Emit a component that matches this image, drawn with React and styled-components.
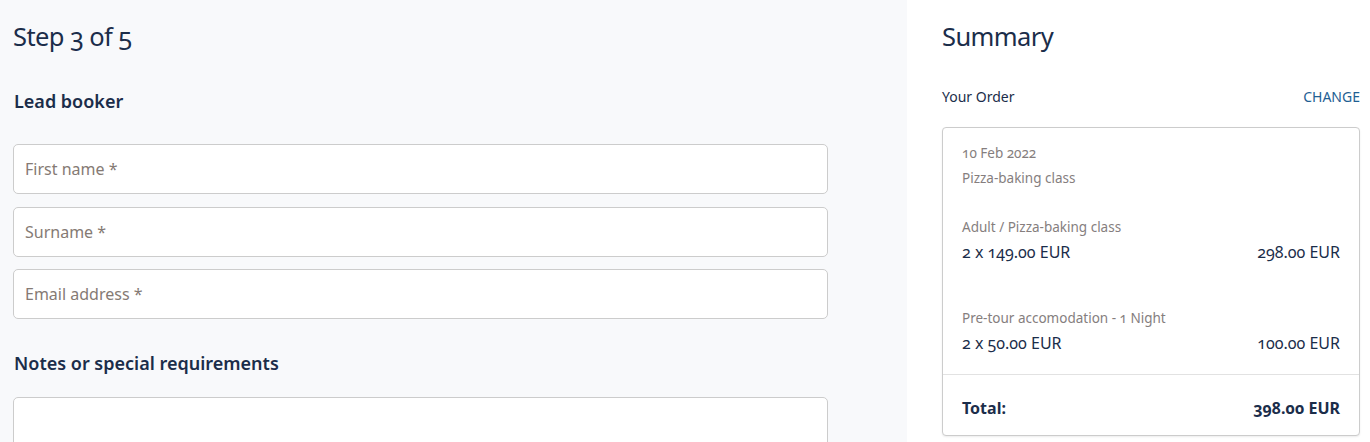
import React from 'react';
import styled, { createGlobalStyle } from 'styled-components';

const GlobalStyle = createGlobalStyle`
    html, body {
        margin: 0;
        padding: 0;
        background: #fff;
    }
    body {
        font-family: "Noto Sans", "Open Sans", sans-serif;
        color: #1b2d4a;
        font-variant-numeric: oldstyle-nums;
    }
`;

const Page = styled.div`
    display: flex;
    width: 1370px;
    height: 442px;
    overflow: hidden;
`;

const FormPane = styled.div`
    width: 907px;
    flex-shrink: 0;
    background: #f8f9fb;
    padding: 18px 79px 0 13px;
    box-sizing: border-box;
`;

const SummaryPane = styled.div`
    flex: 1;
    background: #fff;
    padding: 18px 10px 0 35px;
    box-sizing: border-box;
`;

const PageTitle = styled.h1`
    margin: 0;
    font-size: 25.5px;
    font-weight: 400;
    letter-spacing: -0.6px;
    line-height: 36px;
    color: #1b2d4a;
`;

const SectionTitle = styled.h2`
    margin: ${(p) => p.top}px 0 ${(p) => p.bottom}px 1px;
    font-size: 18px;
    font-weight: 600;
    line-height: 26px;
    color: #1b2d4a;
`;

const Fields = styled.div`
    display: flex;
    flex-direction: column;
    gap: 12.5px;
`;

const Field = styled.input`
    box-sizing: border-box;
    width: 815px;
    height: ${(p) => p.h || 50}px;
    border: 1px solid #cccccc;
    border-radius: 5px;
    background: #fff;
    padding: 0 11px;
    font-family: inherit;
    font-size: 16px;
    color: #1b2d4a;
    outline: none;
    resize: none;

    &::placeholder {
        color: #857a74;
    }
`;

const OrderHead = styled.div`
    display: flex;
    justify-content: space-between;
    align-items: center;
    margin-top: 32px;
    height: 20px;
    font-size: 14px;
`;

const ChangeLink = styled.a`
    color: #1f5f93;
    font-size: 14px;
    text-decoration: none;
    cursor: pointer;
`;

const Card = styled.div`
    margin-top: 21px;
    border: 1px solid #cccccc;
    border-radius: 4px;
    box-shadow: 0 1px 2px rgba(0, 0, 0, 0.08);
    background: #fff;
`;

const CardBody = styled.div`
    padding: 13px 19px 18px 19px;
`;

const Muted = styled.div`
    font-size: 13.5px;
    line-height: 25px;
    color: #857e7e;
`;

const LineItem = styled.div`
    margin-top: ${(p) => p.top}px;
`;

const PriceRow = styled.div`
    display: flex;
    justify-content: space-between;
    font-size: 16px;
    line-height: 25px;
    color: #1b2d4a;
    font-weight: ${(p) => (p.bold ? 700 : 400)};
`;

const TotalRow = styled(PriceRow)`
    border-top: 1px solid #e2e2e2;
    padding: 20px 19px 14px 19px;
    line-height: 26px;
`;

const App = () => {
    return (
        <>
            <GlobalStyle />
            <Page>
                <FormPane>
                    <PageTitle>Step 3 of 5</PageTitle>
                    <SectionTitle top={34} bottom={30}>Lead booker</SectionTitle>
                    <Fields>
                        <Field placeholder="First name *" />
                        <Field placeholder="Surname *" />
                        <Field placeholder="Email address *" />
                    </Fields>
                    <SectionTitle top={31} bottom={21}>Notes or special requirements</SectionTitle>
                    <Field as="textarea" h={80} />
                </FormPane>
                <SummaryPane>
                    <PageTitle>Summary</PageTitle>
                    <OrderHead>
                        <span>Your Order</span>
                        <ChangeLink>CHANGE</ChangeLink>
                    </OrderHead>
                    <Card>
                        <CardBody>
                            <Muted>10 Feb 2022</Muted>
                            <Muted>Pizza-baking class</Muted>
                            <LineItem top={24}>
                                <Muted>Adult / Pizza-baking class</Muted>
                                <PriceRow>
                                    <span>2 x 149.00 EUR</span>
                                    <span>298.00 EUR</span>
                                </PriceRow>
                            </LineItem>
                            <LineItem top={41}>
                                <Muted>Pre-tour accomodation - 1 Night</Muted>
                                <PriceRow>
                                    <span>2 x 50.00 EUR</span>
                                    <span>100.00 EUR</span>
                                </PriceRow>
                            </LineItem>
                        </CardBody>
                        <TotalRow bold>
                            <span>Total:</span>
                            <span>398.00 EUR</span>
                        </TotalRow>
                    </Card>
                </SummaryPane>
            </Page>
        </>
    );
};

export default App;
